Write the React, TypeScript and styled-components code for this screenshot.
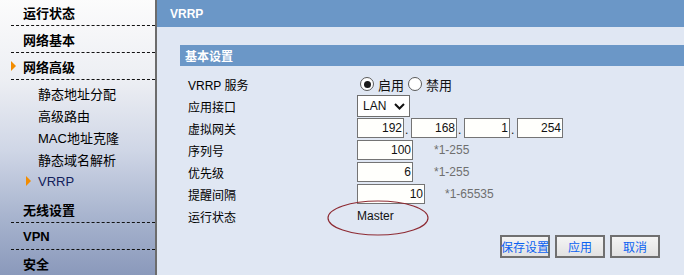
import React from "react";
import styled, { createGlobalStyle } from "styled-components";

const Global = createGlobalStyle`
  html, body { margin: 0; padding: 0; }
  body {
    width: 684px; height: 275px; overflow: hidden;
    font-family: Arial, "Liberation Sans", "Noto Sans CJK SC", sans-serif;
    background: #e0e7f3;
  }
`;

const Page = styled.div`
  display: flex;
  width: 684px;
  height: 275px;
  overflow: hidden;
`;

const Sidebar = styled.nav`
  width: 155px;
  flex: none;
  border-right: 2px solid #6c6c6c;
  background: linear-gradient(180deg, #fcfcfc 0%, #eceef3 30%, #cfd6e6 55%, #a9b5cf 78%, #8a99bb 100%);
  display: flex;
  flex-direction: column;
  margin-top: -1px;
`;

const TopItem = styled.div<{ $dotted?: boolean }>`
  position: relative;
  height: 26px;
  flex: none;
  display: flex;
  align-items: center;
  margin-left: 11px;
  padding-left: 12px;
  font: bold 13px "Liberation Sans", "Noto Sans CJK SC", sans-serif;
  color: #000;
  border-bottom: ${(p) => (p.$dotted ? "1px dashed #111" : "1px solid transparent")};
`;

const Arrow = styled.span<{ $left: number }>`
  position: absolute;
  left: ${(p) => p.$left}px;
  top: 50%;
  margin-top: -5px;
  width: 0;
  height: 0;
  border-top: 5px solid transparent;
  border-bottom: 5px solid transparent;
  border-left: 5px solid #f28c00;
`;

const SubList = styled.div`
  display: flex;
  flex-direction: column;
  padding: 2px 0 4px;
`;

const SubItem = styled.div<{ $active?: boolean }>`
  position: relative;
  height: 22px;
  display: flex;
  align-items: center;
  padding-left: 38px;
  font: 13px "Liberation Sans", "Noto Sans CJK SC", sans-serif;
  color: ${(p) => (p.$active ? "#12205a" : "#000")};
`;

const Main = styled.main`
  flex: 1;
  display: flex;
  flex-direction: column;
  background: #e0e7f3;
`;

const Header = styled.div`
  height: 27px;
  background: #6b97c7;
  color: #fff;
  font: bold 12px "Liberation Sans", sans-serif;
  display: flex;
  align-items: center;
  padding-left: 13px;
`;

const Content = styled.div`
  padding: 18px 0 0 23px;
  display: flex;
  flex-direction: column;
`;

const SectionBar = styled.div`
  height: 21px;
  background: #6b97c7;
  color: #fff;
  font: bold 12px "Noto Sans CJK SC", sans-serif;
  display: flex;
  align-items: center;
  padding-left: 5px;
`;

const Form = styled.div`
  display: grid;
  grid-template-columns: 169px 1fr;
  grid-auto-rows: 22px;
  margin-top: 7px;
  padding-left: 8px;
`;

const Label = styled.div`
  display: flex;
  align-items: center;
  font: 12px "Liberation Sans", "Noto Sans CJK SC", sans-serif;
  color: #000;
`;

const Value = styled.div`
  position: relative;
  display: flex;
  align-items: center;
  font: 12px "Liberation Sans", "Noto Sans CJK SC", sans-serif;
  color: #111;
`;

const RadioCircle = styled.span<{ $checked?: boolean }>`
  width: 14px;
  height: 14px;
  border-radius: 50%;
  border: 1px solid #5a5a5a;
  background: #fff;
  margin: 0 4px 0 3px;
  display: flex;
  align-items: center;
  justify-content: center;
  box-sizing: border-box;
  &::after {
    content: "";
    width: 7px;
    height: 7px;
    border-radius: 50%;
    background: ${(p) => (p.$checked ? "#1a1a1a" : "transparent")};
  }
`;

const RadioText = styled.span`
  font: 13px "Noto Sans CJK SC", sans-serif;
  margin-right: 1px;
`;

const SelectBox = styled.div`
  width: 53px;
  height: 22px;
  box-sizing: border-box;
  border: 1px solid #6e6e6e;
  background: #fff;
  display: flex;
  align-items: center;
  justify-content: space-between;
  padding: 0 4px 0 5px;
  font: 12px "Liberation Sans", sans-serif;
  color: #111;
`;

const Field = styled.div<{ $w: number }>`
  width: ${(p) => p.$w}px;
  height: 20px;
  box-sizing: border-box;
  border: 1px solid #747474;
  background: #fffffc;
  display: flex;
  align-items: center;
  justify-content: flex-end;
  padding-right: 1px;
  font: 12px "Liberation Sans", sans-serif;
  color: #111;
`;

const Dot = styled.span`
  width: 7px;
  box-sizing: border-box;
  align-self: flex-end;
  padding: 0 0 4px 1px;
  font: 12px "Liberation Sans", sans-serif;
  line-height: 10px;
`;

const Hint = styled.span<{ $ml: number }>`
  margin-left: ${(p) => p.$ml}px;
  color: #6f6f6f;
  font: 12px "Liberation Sans", sans-serif;
`;

const Ellipse = styled.svg`
  position: absolute;
  left: -30px;
  top: -5px;
  width: 102px;
  height: 36px;
  overflow: visible;
  pointer-events: none;
`;

const Buttons = styled.div`
  display: flex;
  gap: 5px;
  margin: 8px 0 0 320px;
`;

const Button = styled.button`
  width: 50px;
  height: 23px;
  padding: 0;
  box-sizing: border-box;
  border: 2px solid #707070;
  background: linear-gradient(180deg, #f4f4f4 0%, #e2e2e2 100%);
  color: #0a62f2;
  font: 12px "Noto Sans CJK SC", sans-serif;
  white-space: nowrap;
  display: flex;
  align-items: center;
  justify-content: center;
`;

const Chevron = () => (
  <svg width="11" height="7" viewBox="0 0 11 7">
    <path d="M1 1 L5.5 5.5 L10 1" fill="none" stroke="#111" strokeWidth="2" />
  </svg>
);

export default function App() {
  return (
    <>
      <Global />
      <Page>
        <Sidebar>
          <TopItem $dotted>运行状态</TopItem>
          <TopItem $dotted>网络基本</TopItem>
          <TopItem $dotted>
            <Arrow $left={0} />
            网络高级
          </TopItem>
          <SubList>
            <SubItem>静态地址分配</SubItem>
            <SubItem>高级路由</SubItem>
            <SubItem>MAC地址克隆</SubItem>
            <SubItem>静态域名解析</SubItem>
            <SubItem $active>
              <Arrow $left={26} />
              VRRP
            </SubItem>
          </SubList>
          <TopItem $dotted>无线设置</TopItem>
          <TopItem $dotted>VPN</TopItem>
          <TopItem>安全</TopItem>
        </Sidebar>
        <Main>
          <Header>VRRP</Header>
          <Content>
            <SectionBar>基本设置</SectionBar>
            <Form>
              <Label>VRRP 服务</Label>
              <Value>
                <RadioCircle $checked />
                <RadioText>启用</RadioText>
                <RadioCircle />
                <RadioText>禁用</RadioText>
              </Value>

              <Label>应用接口</Label>
              <Value>
                <SelectBox>
                  LAN
                  <Chevron />
                </SelectBox>
              </Value>

              <Label>虚拟网关</Label>
              <Value>
                <Field $w={47}>192</Field>
                <Dot>.</Dot>
                <Field $w={46}>168</Field>
                <Dot>.</Dot>
                <Field $w={46}>1</Field>
                <Dot>.</Dot>
                <Field $w={46}>254</Field>
              </Value>

              <Label>序列号</Label>
              <Value>
                <Field $w={56}>100</Field>
                <Hint $ml={21}>*1-255</Hint>
              </Value>

              <Label>优先级</Label>
              <Value>
                <Field $w={56}>6</Field>
                <Hint $ml={21}>*1-255</Hint>
              </Value>

              <Label>提醒间隔</Label>
              <Value>
                <Field $w={68}>10</Field>
                <Hint $ml={20}>*1-65535</Hint>
              </Value>

              <Label>运行状态</Label>
              <Value>
                Master
                <Ellipse viewBox="0 0 102 36">
                  <ellipse cx="51" cy="18" rx="50" ry="17" fill="none" stroke="#8e2b33" strokeWidth="1.2" />
                </Ellipse>
              </Value>
            </Form>
            <Buttons>
              <Button>保存设置</Button>
              <Button>应用</Button>
              <Button>取消</Button>
            </Buttons>
          </Content>
        </Main>
      </Page>
    </>
  );
}
